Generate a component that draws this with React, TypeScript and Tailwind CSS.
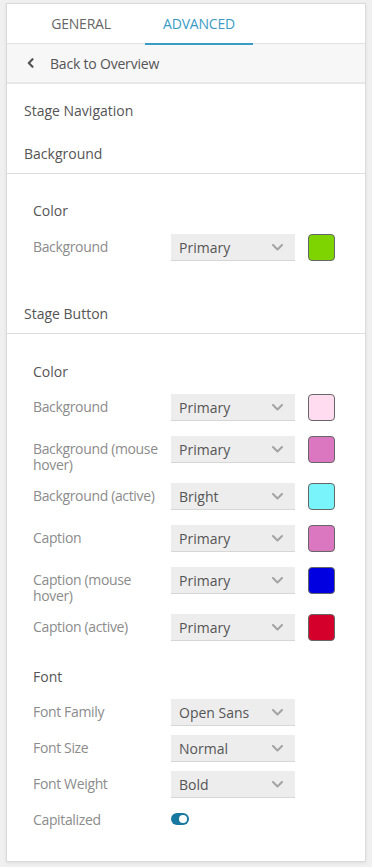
import React from 'react';

type ColorRow = {
  label: string
  value: string
  swatch: string
}

const colorRows: ColorRow[] = [
  { label: 'Background', value: 'Primary', swatch: '#ffdcef' },
  { label: 'Background (mouse hover)', value: 'Primary', swatch: '#db77c1' },
  { label: 'Background (active)', value: 'Bright', swatch: '#7af4fb' },
  { label: 'Caption', value: 'Primary', swatch: '#db77c1' },
  { label: 'Caption (mouse hover)', value: 'Primary', swatch: '#0000e0' },
  { label: 'Caption (active)', value: 'Primary', swatch: '#d4002b' },
];

const fontRows = [
  { label: 'Font Family', value: 'Open Sans' },
  { label: 'Font Size', value: 'Normal' },
  { label: 'Font Weight', value: 'Bold' },
];

const Chevron = () => (
  <svg width="11" height="7" viewBox="0 0 11 7" fill="none" className="shrink-0">
    <path d="M1 1l4.5 4.5L10 1" stroke="#a3a3a3" strokeWidth="2" strokeLinecap="round" strokeLinejoin="round" />
  </svg>
);

const Select = ({ value }: { value: string }) => (
  <div className="w-[124px] h-[27px] shrink-0 flex items-center justify-between pl-[8px] pr-[12px] bg-[#ededed] border-b border-[#d6d6d6] text-[14px] text-[#555]">
    <span>{value}</span>
    <Chevron />
  </div>
);

const Label = ({ text }: { text: string }) => (
  <div className="w-[138px] shrink-0 mt-[5px] -mb-[5px] text-[14px] leading-[16px] tracking-[-0.35px] text-[#8c8c8c]">
    {text}
  </div>
);

const Header = ({ text, className }: { text: string; className?: string }) => (
  <div className={'px-[17px] text-[14px] leading-5 text-[#555] ' + (className || '')}>{text}</div>
);

export default function App() {
  return (
    <div className="min-h-[867px] bg-[#f0f0f0] pt-[3px] pb-[7px]" style={{ fontFamily: '"Open Sans", "Liberation Sans", sans-serif' }}>
      <div className="ml-[6px] w-[360px] bg-white border border-[#dadada] shadow-[0_1px_3px_rgba(0,0,0,0.08)] pb-[36px]">
        {/* tabs */}
        <div className="flex h-[40px] border-b border-[#e2e2e2]">
          <div className="ml-[27px] w-[94px] flex items-center justify-center text-[14px] text-[#666] uppercase tracking-[-0.2px]">General</div>
          <div className="ml-[17px] w-[108px] h-[41px] flex items-center justify-center text-[14px] text-[#3a9cc5] uppercase tracking-[-0.2px] border-b-2 border-[#3a9cc5] -mb-px">Advanced</div>
        </div>

        {/* back */}
        <div className="h-[40px] flex items-center bg-[#f7f7f7] border-b-2 border-[#e8e8e8] pl-[20px] text-[14px] text-[#555] tracking-[-0.2px]">
          <svg width="7" height="10" viewBox="0 0 7 10" fill="none" className="mr-[16px]">
            <path d="M5.5 1.2L1.8 5l3.7 3.8" stroke="#555" strokeWidth="2.2" strokeLinecap="round" strokeLinejoin="round" />
          </svg>
          Back to Overview
        </div>

        <Header text="Stage Navigation" className="pt-[17px]" />
        <Header text="Background" className="mt-[23px] pb-[9px] border-b border-[#dedede]" />

        <div className="px-[26px] pt-[27px]">
          <div className="text-[14px] leading-5 text-[#555] mb-[13px]">Color</div>
          <div className="flex items-start">
            <Label text="Background" />
            <Select value="Primary" />
            <div className="ml-[13px] w-[27px] h-[27px] rounded-[4px] border border-[#666] bg-[#7ed400]" />
          </div>
        </div>

        <Header text="Stage Button" className="mt-[43px] pb-[9px] border-b border-[#dedede]" />

        <div className="px-[26px] pt-[28px]">
          <div className="text-[14px] leading-5 text-[#555] mb-[12px]">Color</div>
          <div className="flex flex-col gap-[15px]">
            {colorRows.map((r) => (
              <div key={r.label} className="flex items-start">
                <Label text={r.label} />
                <Select value={r.value} />
                <div className="ml-[13px] w-[27px] h-[27px] rounded-[4px] border border-[#666]" style={{ backgroundColor: r.swatch }} />
              </div>
            ))}
          </div>

          <div className="mt-[26px] text-[14px] leading-5 text-[#555] mb-[12px]">Font</div>
          <div className="flex flex-col gap-[9px]">
            {fontRows.map((r) => (
              <div key={r.label} className="flex items-start">
                <Label text={r.label} />
                <Select value={r.value} />
              </div>
            ))}
            <div className="flex items-start">
              <Label text="Capitalized" />
              <div className="mt-[6px] w-[18px] h-[12px] rounded-full bg-[#17799f] flex items-center justify-end pr-[2px]">
                <div className="w-[8px] h-[8px] rounded-full bg-white" />
              </div>
            </div>
          </div>
        </div>
      </div>
    </div>
  );
}
